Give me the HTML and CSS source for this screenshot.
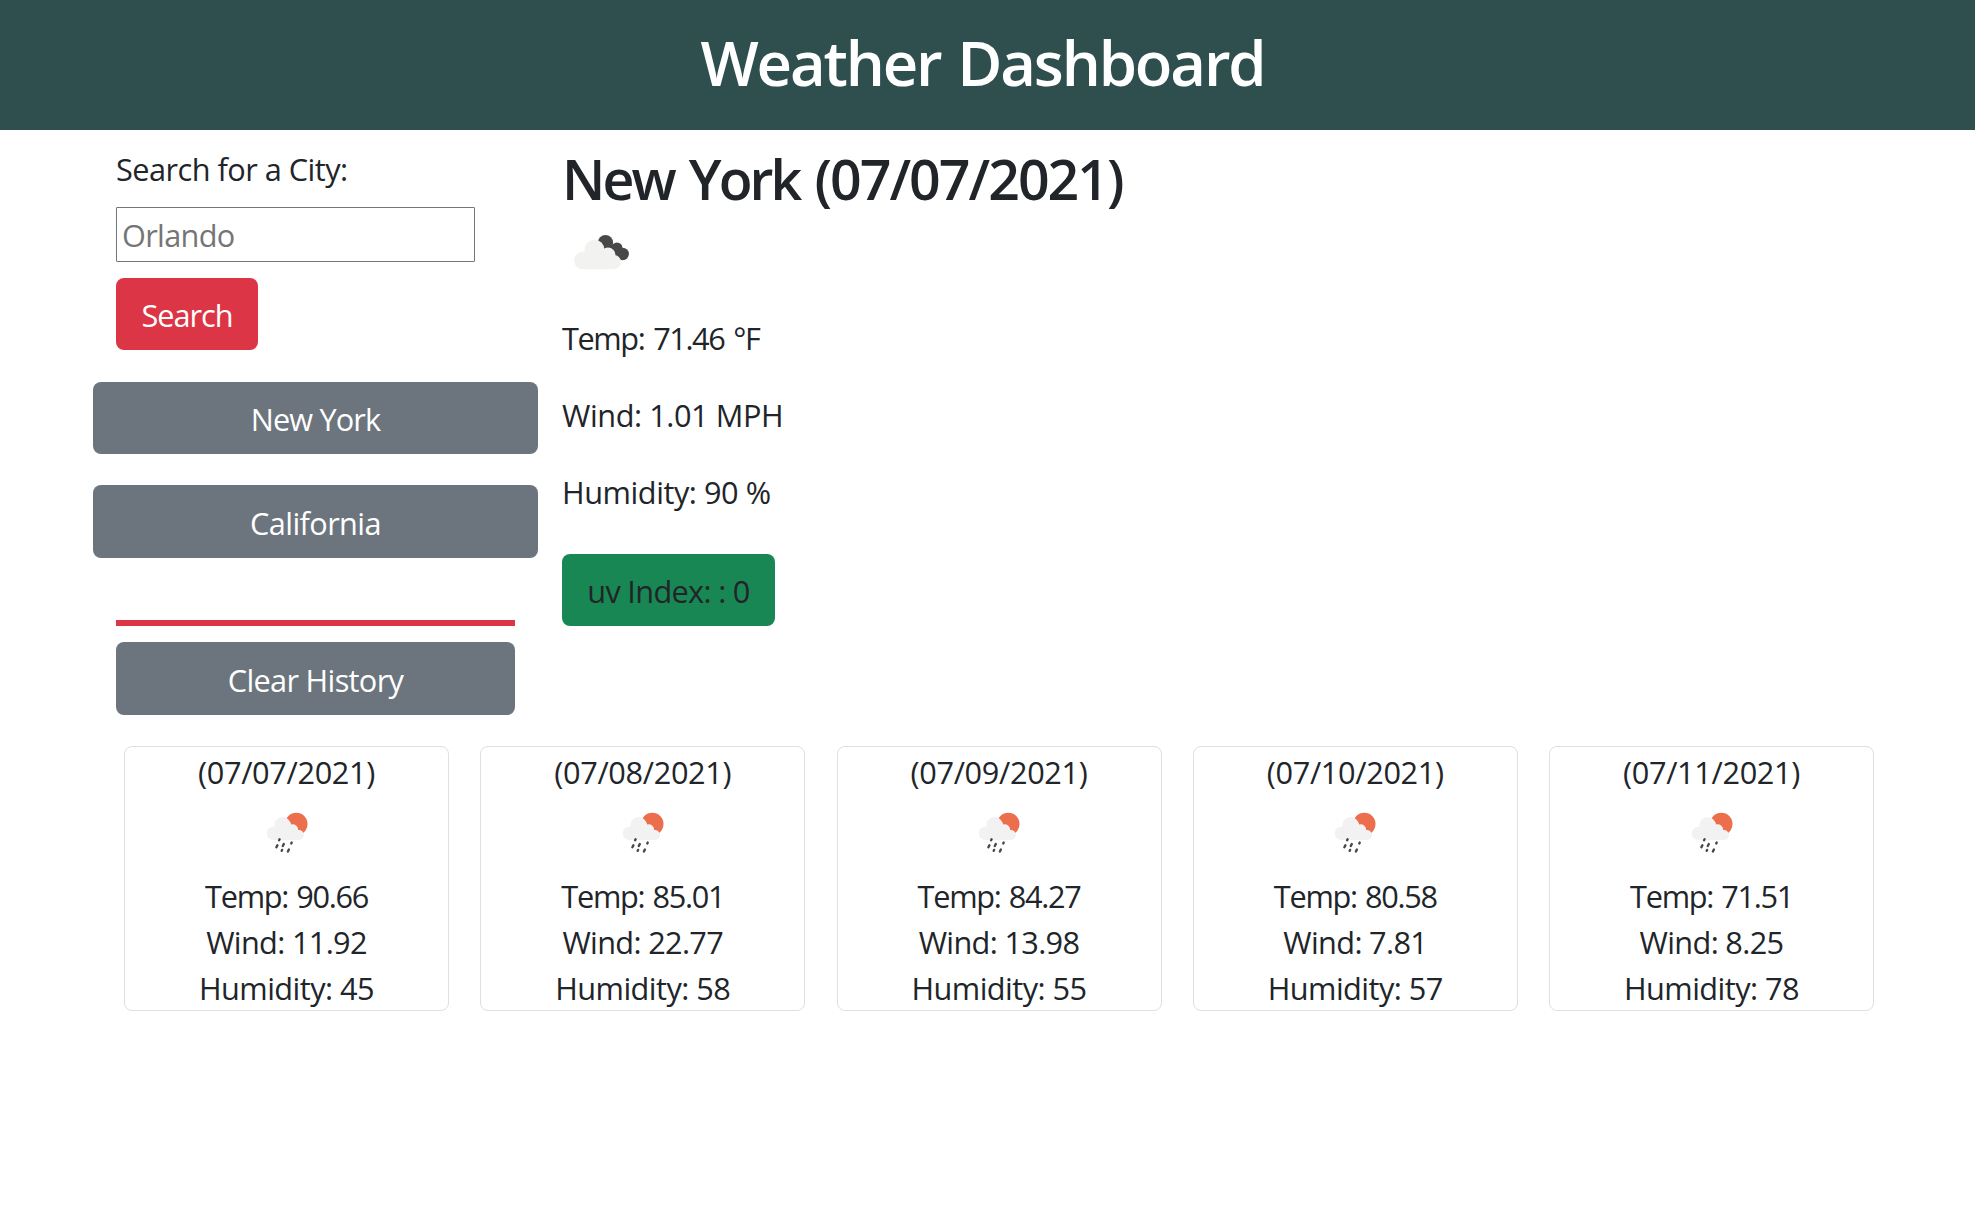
FILE: index.html
```html
<!DOCTYPE html>
<html lang="en">
<head>
<meta charset="utf-8">
<title>Weather Dashboard</title>
<link rel="stylesheet" href="styles.css">
</head>
<body>
<svg class="defs" width="0" height="0" aria-hidden="true">
  <symbol id="rain" viewBox="0.7 0 78 78">
    <circle cx="49" cy="29" r="11.2" fill="#ec6e4c"/>
    <path d="M26 45a6.6 6.6 0 0 1 0-13.2h1.2a8.2 8.2 0 0 1 15.2-5.6 9 9 0 0 1 1.5 3.300a5.500 5.500 0 0 1 7 5.500 5 5 0 0 1 5.800 5a4.900 4.900 0 0 1-4.700 5z" fill="#f2f2f2"/>
    <g stroke="#48484a" stroke-width="2.400" stroke-linecap="round">
      <path d="M31.800 45.300l.5-1M30.100 50.200l-1 2M36.500 49l-1 2M44 48.500l.4-.9M34.400 55.800l.4-.9M41.600 54.500l-1 2"/>
    </g>
  </symbol>
</svg>
<header class="header"><h1 class="title">Weather Dashboard</h1></header>
<main class="container">
  <div class="top">
    <aside class="sidebar">
      <form class="search">
        <label class="label" for="city">Search for a City:</label>
        <input class="input" id="city" type="text" placeholder="Orlando">
        <button class="btn btn-danger" type="button">Search</button>
      </form>
      <div class="history">
        <button class="btn btn-city" type="button">New York</button>
        <button class="btn btn-state" type="button">California</button>
      </div>
      <div class="rule"></div>
      <button class="btn btn-clear" type="button">Clear History</button>
    </aside>
    <section class="current">
      <h2 class="city"><span class="name">New York </span>(07/07/2021)</h2>
      <svg class="clouds" viewBox="0 0 96 103" aria-label="Broken clouds">
        <g fill="#48484a"><circle cx="43.500" cy="30.700" r="7.600"/><circle cx="55" cy="36" r="5.500"/><circle cx="60.700" cy="42" r="6.200"/><path d="M43 38l7-6 8 15z"/></g>
        <g fill="#f2f2f1"><circle cx="20.700" cy="48.500" r="8.700"/><circle cx="32.500" cy="37.500" r="9.800"/><circle cx="46" cy="43" r="7.500"/><circle cx="52" cy="50" r="7"/><path d="M20.700 57.200V40L32 34l14 6 6 17.200z"/></g>
      </svg>
      <p class="stat stat-temp">Temp: 71.46 °F</p>
      <p class="stat stat-wind">Wind: 1.01 MPH</p>
      <p class="stat stat-humidity">Humidity: 90 %</p>
      <div class="uv">uv Index: : 0</div>
    </section>
  </div>
  <section class="forecast">
    <article class="card"><p class="date">(07/07/2021)</p><svg class="icon"><use href="#rain"/></svg><p class="temp">Temp: 90.66</p><p class="wind">Wind: 11.92</p><p class="humidity">Humidity: 45</p></article>
    <article class="card"><p class="date">(07/08/2021)</p><svg class="icon"><use href="#rain"/></svg><p class="temp">Temp: 85.01</p><p class="wind">Wind: 22.77</p><p class="humidity">Humidity: 58</p></article>
    <article class="card"><p class="date">(07/09/2021)</p><svg class="icon"><use href="#rain"/></svg><p class="temp">Temp: 84.27</p><p class="wind">Wind: 13.98</p><p class="humidity">Humidity: 55</p></article>
    <article class="card"><p class="date">(07/10/2021)</p><svg class="icon"><use href="#rain"/></svg><p class="temp">Temp: 80.58</p><p class="wind">Wind: 7.81</p><p class="humidity">Humidity: 57</p></article>
    <article class="card"><p class="date">(07/11/2021)</p><svg class="icon"><use href="#rain"/></svg><p class="temp">Temp: 71.51</p><p class="wind">Wind: 8.25</p><p class="humidity">Humidity: 78</p></article>
  </section>
</main>
</body>
</html>
```
FILE: styles.css
```css
* { box-sizing: border-box; }
body {
  margin: 0;
  background: #fff;
  color: #212529;
  font: 400 30.7px/46px "Open Sans", "Noto Sans", sans-serif;
}
h1, h2, p { margin: 0; }
.defs { display: block; }
.header { height: 130px; padding: 25px 10px 0 0; background: #2f4f4f; text-align: center; }
.title { color: #fff; font-size: 61.6px; font-weight: 600; line-height: 74px; letter-spacing: -2.15px; word-spacing: 3px; }
.container { padding: 0 93px; }
.top { display: flex; height: 616px; padding-top: 16px; }
.sidebar { display: flex; flex-direction: column; width: 445px; padding: 0 23px; }
.search { display: flex; flex-direction: column; align-items: flex-start; }
.label { letter-spacing: -.52px; }
.input {
  width: 359px; height: 55px; margin: 15px 0 16px; padding: 1px 5px;
  border: 1px solid #767676; border-radius: 1px; background: #fff;
  font: inherit; letter-spacing: -.67px;
}
.input::placeholder { color: #757575; opacity: 1; }
.btn {
  height: 72px; padding: 14px 0 12px; border: 0; border-radius: 8px;
  background: #6c757d; color: #fff; font: inherit; text-align: center;
}
.btn-danger { width: 142px; background: #dc3545; letter-spacing: -1.04px; }
.history { display: flex; flex-direction: column; gap: 31px; margin: 32px -23px 0; }
.btn-city { letter-spacing: -.84px; }
.btn-state { height: 73px; padding-top: 15px; letter-spacing: -.6px; }
.rule { height: 6px; margin: 62px 0 16px; background: #dc3545; }
.btn-clear { height: 73px; padding-top: 15px; letter-spacing: -.67px; }
.current { display: flex; flex-direction: column; align-items: flex-start; padding-left: 24px; }
.city { font-size: 55.4px; font-weight: 600; line-height: 66px; letter-spacing: -1.95px; }
.name { letter-spacing: -2.9px; word-spacing: 3.5px; }
.clouds { display: block; width: 96px; height: 103px; }
.stat { margin-bottom: 31px; }
.stat-temp { letter-spacing: -1.4px; word-spacing: 2.2px; }
.stat-wind { letter-spacing: -.42px; }
.stat-humidity { margin-bottom: 39px; letter-spacing: -.45px; }
.uv { width: 213px; height: 72px; padding-top: 14px; border-radius: 8px; background: #198754; text-align: center; letter-spacing: -.67px; }
.forecast { display: grid; grid-template-columns: repeat(5, 325px); gap: 31.25px; padding-left: 31px; }
.card { height: 265px; padding-top: 2px; border: 1px solid #dfdfdf; border-radius: 8px; text-align: center; }
.icon { display: block; width: 78px; height: 78px; margin: 0 auto; }
.date { letter-spacing: -.33px; }
.temp { letter-spacing: -1.3px; word-spacing: 1.5px; }
.wind { letter-spacing: -.66px; }
.humidity { letter-spacing: -.53px; }
```
